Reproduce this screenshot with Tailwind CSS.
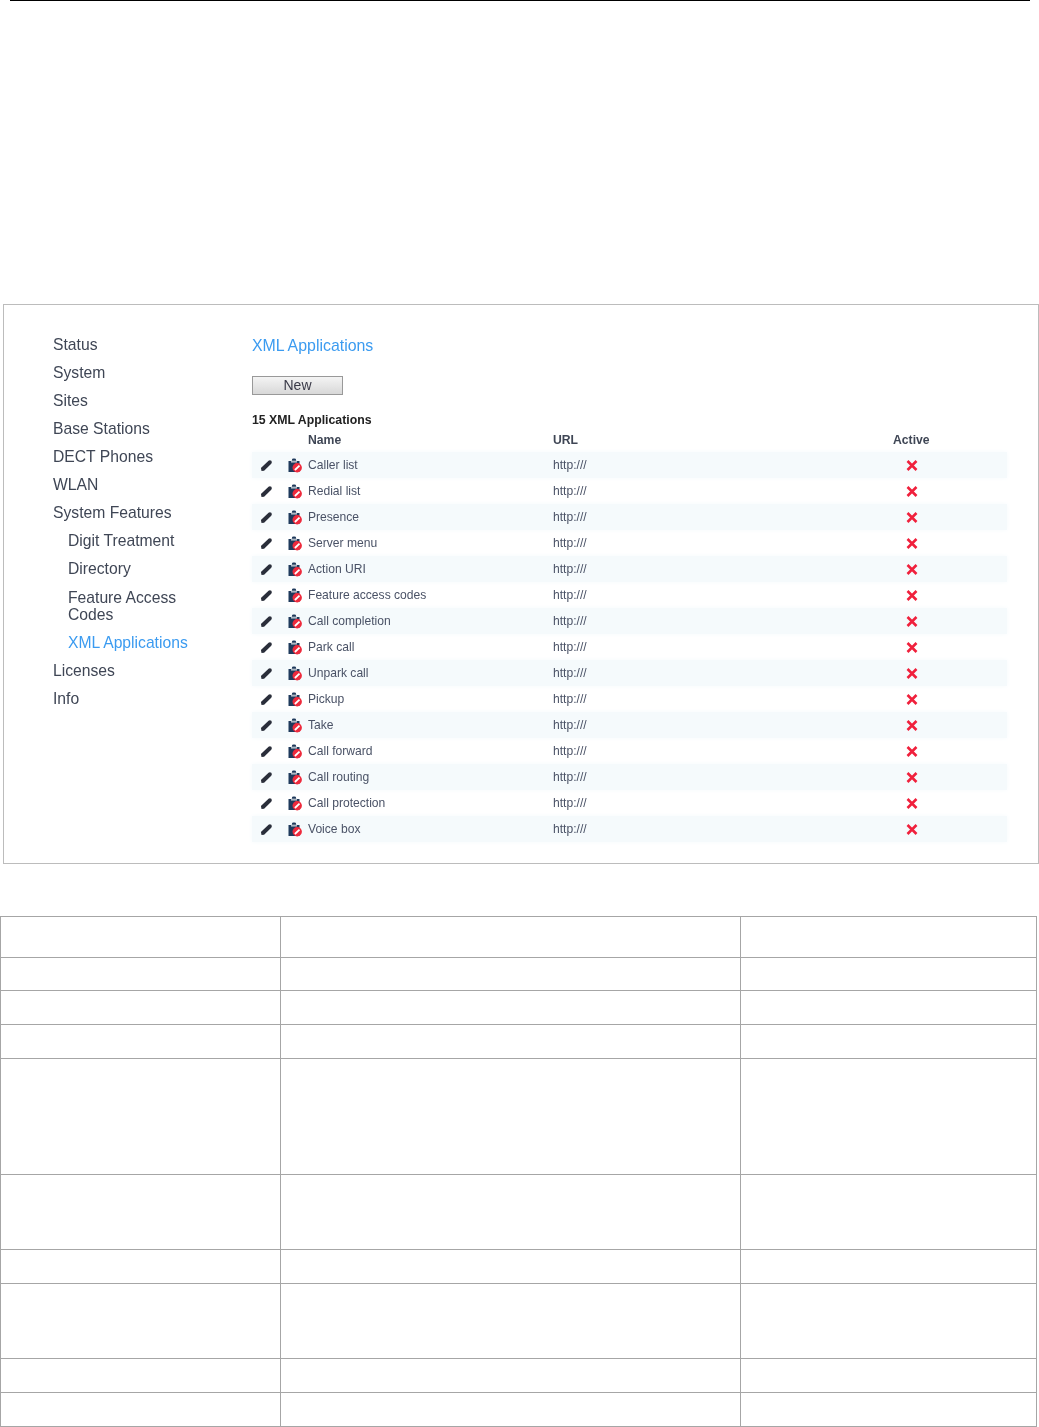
<!DOCTYPE html>
<html>
<head>
<meta charset="utf-8">
<script src="https://cdn.jsdelivr.net/npm/@tailwindcss/browser@4"></script>
</head>
<body class="bg-white font-['Liberation_Sans',Arial,sans-serif]">
<svg width="0" height="0" class="absolute">
  <defs>
    <symbol id="pen" viewBox="0 0 14 14"><path d="M1.6 13 L1 9.8 L9.2 2 Q10.6 .9 12.2 2 Q13.4 3.5 12.1 5 L4.4 12.6 Z" fill="#2a2e3a"/></symbol>
    <symbol id="clip" viewBox="0 0 15 15">
      <path d="M0.5 3 H4 V1.5 Q4 .5 5.5 .5 H6.5 Q8 .5 8 1.5 V3 H11.5 V14 H0.5 Z" fill="#1f3a5c"/>
      <rect x="3" y="2.6" width="6" height="2" fill="#aeb8c4"/>
      <circle cx="9.2" cy="9.8" r="4.7" fill="#ee2a3c"/>
      <path d="M6.9 12 L11.5 7.6" stroke="#fff" stroke-width="1.8"/>
    </symbol>
    <symbol id="x" viewBox="0 0 12 11"><path d="M1.5 1 L10.5 10 M10.5 1 L1.5 10" stroke="#f0203c" stroke-width="2.6"/></symbol>
  </defs>
</svg>
<div class="h-[304px]">
  <div class="h-px ml-[10px] mr-[9px] bg-black"></div>
</div>
<section class="ml-[3px] h-[560px] border border-[#bcbcbc] flex text-[#3f4655]">
  <nav class="w-[248px] shrink-0 pl-[49px] pt-[31px] text-[15.7px] leading-[17px] blur-[0.35px]">
    <ul class="flex flex-col gap-[11px]">
      <li>Status</li>
      <li>System</li>
      <li>Sites</li>
      <li>Base Stations</li>
      <li>DECT Phones</li>
      <li>WLAN</li>
      <li>System Features</li>
      <li class="pl-[15px]">Digit Treatment</li>
      <li class="pl-[15px]">Directory</li>
      <li class="pl-[15px] mt-px">Feature Access<br>Codes</li>
      <li class="pl-[15px] text-[#3b9bf0]">XML Applications</li>
      <li>Licenses</li>
      <li>Info</li>
    </ul>
  </nav>
  <main class="w-[755px] pt-[31px] blur-[0.35px]">
    <h1 class="text-[15.9px] leading-[20px] text-[#3b9bf0]">XML Applications</h1>
    <button class="block mt-[20px] w-[91px] h-[19px] border border-[#999] bg-gradient-to-b from-[#f4f4f4] to-[#d8d8d8] text-[14px] leading-[17px] text-[#3a3a48]">New</button>
    <p class="mt-[18px] text-[12.3px] leading-[14px] font-bold text-[#222]">15 XML Applications</p>
    <div class="mt-[6px] h-[14px] grid grid-cols-[56px_245px_340px_1fr] text-[12.2px] leading-[14px] font-bold text-[#3f4655]">
      <span></span><span>Name</span><span>URL</span><span>Active</span>
    </div>
    <div id="rows" class="mt-[5px] text-[12.1px] text-[#4a5266]">
      <div class="h-[26px] bg-[#f5fafc] shadow-[0_0_5px_#f5fafc] grid grid-cols-[56px_245px_340px_1fr] items-center"><span class="flex items-center"><svg class="ml-[8px] w-[13px] h-[13px]"><use href="#pen"/></svg><svg class="ml-[15px] w-[15px] h-[15px]"><use href="#clip"/></svg></span><span>Caller list</span><span>http:///</span><svg class="ml-[13px] w-[12px] h-[11px]"><use href="#x"/></svg></div>
      <div class="h-[26px] grid grid-cols-[56px_245px_340px_1fr] items-center"><span class="flex items-center"><svg class="ml-[8px] w-[13px] h-[13px]"><use href="#pen"/></svg><svg class="ml-[15px] w-[15px] h-[15px]"><use href="#clip"/></svg></span><span>Redial list</span><span>http:///</span><svg class="ml-[13px] w-[12px] h-[11px]"><use href="#x"/></svg></div>
      <div class="h-[26px] bg-[#f5fafc] shadow-[0_0_5px_#f5fafc] grid grid-cols-[56px_245px_340px_1fr] items-center"><span class="flex items-center"><svg class="ml-[8px] w-[13px] h-[13px]"><use href="#pen"/></svg><svg class="ml-[15px] w-[15px] h-[15px]"><use href="#clip"/></svg></span><span>Presence</span><span>http:///</span><svg class="ml-[13px] w-[12px] h-[11px]"><use href="#x"/></svg></div>
      <div class="h-[26px] grid grid-cols-[56px_245px_340px_1fr] items-center"><span class="flex items-center"><svg class="ml-[8px] w-[13px] h-[13px]"><use href="#pen"/></svg><svg class="ml-[15px] w-[15px] h-[15px]"><use href="#clip"/></svg></span><span>Server menu</span><span>http:///</span><svg class="ml-[13px] w-[12px] h-[11px]"><use href="#x"/></svg></div>
      <div class="h-[26px] bg-[#f5fafc] shadow-[0_0_5px_#f5fafc] grid grid-cols-[56px_245px_340px_1fr] items-center"><span class="flex items-center"><svg class="ml-[8px] w-[13px] h-[13px]"><use href="#pen"/></svg><svg class="ml-[15px] w-[15px] h-[15px]"><use href="#clip"/></svg></span><span>Action URI</span><span>http:///</span><svg class="ml-[13px] w-[12px] h-[11px]"><use href="#x"/></svg></div>
      <div class="h-[26px] grid grid-cols-[56px_245px_340px_1fr] items-center"><span class="flex items-center"><svg class="ml-[8px] w-[13px] h-[13px]"><use href="#pen"/></svg><svg class="ml-[15px] w-[15px] h-[15px]"><use href="#clip"/></svg></span><span>Feature access codes</span><span>http:///</span><svg class="ml-[13px] w-[12px] h-[11px]"><use href="#x"/></svg></div>
      <div class="h-[26px] bg-[#f5fafc] shadow-[0_0_5px_#f5fafc] grid grid-cols-[56px_245px_340px_1fr] items-center"><span class="flex items-center"><svg class="ml-[8px] w-[13px] h-[13px]"><use href="#pen"/></svg><svg class="ml-[15px] w-[15px] h-[15px]"><use href="#clip"/></svg></span><span>Call completion</span><span>http:///</span><svg class="ml-[13px] w-[12px] h-[11px]"><use href="#x"/></svg></div>
      <div class="h-[26px] grid grid-cols-[56px_245px_340px_1fr] items-center"><span class="flex items-center"><svg class="ml-[8px] w-[13px] h-[13px]"><use href="#pen"/></svg><svg class="ml-[15px] w-[15px] h-[15px]"><use href="#clip"/></svg></span><span>Park call</span><span>http:///</span><svg class="ml-[13px] w-[12px] h-[11px]"><use href="#x"/></svg></div>
      <div class="h-[26px] bg-[#f5fafc] shadow-[0_0_5px_#f5fafc] grid grid-cols-[56px_245px_340px_1fr] items-center"><span class="flex items-center"><svg class="ml-[8px] w-[13px] h-[13px]"><use href="#pen"/></svg><svg class="ml-[15px] w-[15px] h-[15px]"><use href="#clip"/></svg></span><span>Unpark call</span><span>http:///</span><svg class="ml-[13px] w-[12px] h-[11px]"><use href="#x"/></svg></div>
      <div class="h-[26px] grid grid-cols-[56px_245px_340px_1fr] items-center"><span class="flex items-center"><svg class="ml-[8px] w-[13px] h-[13px]"><use href="#pen"/></svg><svg class="ml-[15px] w-[15px] h-[15px]"><use href="#clip"/></svg></span><span>Pickup</span><span>http:///</span><svg class="ml-[13px] w-[12px] h-[11px]"><use href="#x"/></svg></div>
      <div class="h-[26px] bg-[#f5fafc] shadow-[0_0_5px_#f5fafc] grid grid-cols-[56px_245px_340px_1fr] items-center"><span class="flex items-center"><svg class="ml-[8px] w-[13px] h-[13px]"><use href="#pen"/></svg><svg class="ml-[15px] w-[15px] h-[15px]"><use href="#clip"/></svg></span><span>Take</span><span>http:///</span><svg class="ml-[13px] w-[12px] h-[11px]"><use href="#x"/></svg></div>
      <div class="h-[26px] grid grid-cols-[56px_245px_340px_1fr] items-center"><span class="flex items-center"><svg class="ml-[8px] w-[13px] h-[13px]"><use href="#pen"/></svg><svg class="ml-[15px] w-[15px] h-[15px]"><use href="#clip"/></svg></span><span>Call forward</span><span>http:///</span><svg class="ml-[13px] w-[12px] h-[11px]"><use href="#x"/></svg></div>
      <div class="h-[26px] bg-[#f5fafc] shadow-[0_0_5px_#f5fafc] grid grid-cols-[56px_245px_340px_1fr] items-center"><span class="flex items-center"><svg class="ml-[8px] w-[13px] h-[13px]"><use href="#pen"/></svg><svg class="ml-[15px] w-[15px] h-[15px]"><use href="#clip"/></svg></span><span>Call routing</span><span>http:///</span><svg class="ml-[13px] w-[12px] h-[11px]"><use href="#x"/></svg></div>
      <div class="h-[26px] grid grid-cols-[56px_245px_340px_1fr] items-center"><span class="flex items-center"><svg class="ml-[8px] w-[13px] h-[13px]"><use href="#pen"/></svg><svg class="ml-[15px] w-[15px] h-[15px]"><use href="#clip"/></svg></span><span>Call protection</span><span>http:///</span><svg class="ml-[13px] w-[12px] h-[11px]"><use href="#x"/></svg></div>
      <div class="h-[26px] bg-[#f5fafc] shadow-[0_0_5px_#f5fafc] grid grid-cols-[56px_245px_340px_1fr] items-center"><span class="flex items-center"><svg class="ml-[8px] w-[13px] h-[13px]"><use href="#pen"/></svg><svg class="ml-[15px] w-[15px] h-[15px]"><use href="#clip"/></svg></span><span>Voice box</span><span>http:///</span><svg class="ml-[13px] w-[12px] h-[11px]"><use href="#x"/></svg></div>
    </div>
  </main>
</section>
<div class="mt-[52px] w-[1037px] border-t border-l border-[#a6a6a6]">
  <div class="h-[41px] grid grid-cols-[280px_460px_296px] border-b border-[#a6a6a6]"><div class="border-r border-[#a6a6a6]"></div><div class="border-r border-[#a6a6a6]"></div><div class="border-r border-[#a6a6a6]"></div></div>
  <div class="h-[33px] grid grid-cols-[280px_460px_296px] border-b border-[#a6a6a6]"><div class="border-r border-[#a6a6a6]"></div><div class="border-r border-[#a6a6a6]"></div><div class="border-r border-[#a6a6a6]"></div></div>
  <div class="h-[34px] grid grid-cols-[280px_460px_296px] border-b border-[#a6a6a6]"><div class="border-r border-[#a6a6a6]"></div><div class="border-r border-[#a6a6a6]"></div><div class="border-r border-[#a6a6a6]"></div></div>
  <div class="h-[34px] grid grid-cols-[280px_460px_296px] border-b border-[#a6a6a6]"><div class="border-r border-[#a6a6a6]"></div><div class="border-r border-[#a6a6a6]"></div><div class="border-r border-[#a6a6a6]"></div></div>
  <div class="h-[116px] grid grid-cols-[280px_460px_296px] border-b border-[#a6a6a6]"><div class="border-r border-[#a6a6a6]"></div><div class="border-r border-[#a6a6a6]"></div><div class="border-r border-[#a6a6a6]"></div></div>
  <div class="h-[75px] grid grid-cols-[280px_460px_296px] border-b border-[#a6a6a6]"><div class="border-r border-[#a6a6a6]"></div><div class="border-r border-[#a6a6a6]"></div><div class="border-r border-[#a6a6a6]"></div></div>
  <div class="h-[34px] grid grid-cols-[280px_460px_296px] border-b border-[#a6a6a6]"><div class="border-r border-[#a6a6a6]"></div><div class="border-r border-[#a6a6a6]"></div><div class="border-r border-[#a6a6a6]"></div></div>
  <div class="h-[75px] grid grid-cols-[280px_460px_296px] border-b border-[#a6a6a6]"><div class="border-r border-[#a6a6a6]"></div><div class="border-r border-[#a6a6a6]"></div><div class="border-r border-[#a6a6a6]"></div></div>
  <div class="h-[34px] grid grid-cols-[280px_460px_296px] border-b border-[#a6a6a6]"><div class="border-r border-[#a6a6a6]"></div><div class="border-r border-[#a6a6a6]"></div><div class="border-r border-[#a6a6a6]"></div></div>
  <div class="h-[34px] grid grid-cols-[280px_460px_296px] border-b border-[#a6a6a6]"><div class="border-r border-[#a6a6a6]"></div><div class="border-r border-[#a6a6a6]"></div><div class="border-r border-[#a6a6a6]"></div></div>
</div>
</body>
</html>
